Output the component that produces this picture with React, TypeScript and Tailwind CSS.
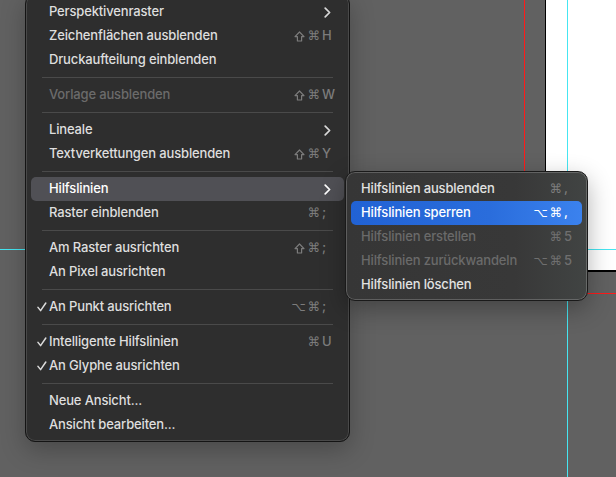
import React from "react";

type Item =
  | { sep: true }
  | {
      sep?: false;
      label: string;
      mods?: string;
      k?: string;
      sub?: boolean;
      check?: boolean;
      disabled?: boolean;
      hover?: boolean;
    };

const mainItems: Item[] = [
  { label: "Perspektivenraster", sub: true },
  { label: "Zeichenflächen ausblenden", mods: "⇧⌘", k: "H" },
  { label: "Druckaufteilung einblenden" },
  { sep: true },
  { label: "Vorlage ausblenden", mods: "⇧⌘", k: "W", disabled: true },
  { sep: true },
  { label: "Lineale", sub: true },
  { label: "Textverkettungen ausblenden", mods: "⇧⌘", k: "Y" },
  { sep: true },
  { label: "Hilfslinien", sub: true, hover: true },
  { label: "Raster einblenden", mods: "⌘", k: ";" },
  { sep: true },
  { label: "Am Raster ausrichten", mods: "⇧⌘", k: ";" },
  { label: "An Pixel ausrichten" },
  { sep: true },
  { label: "An Punkt ausrichten", mods: "⌥⌘", k: ";", check: true },
  { sep: true },
  { label: "Intelligente Hilfslinien", mods: "⌘", k: "U", check: true },
  { label: "An Glyphe ausrichten", check: true },
  { sep: true },
  { label: "Neue Ansicht..." },
  { label: "Ansicht bearbeiten..." },
];

const subItems = [
  { label: "Hilfslinien ausblenden", mods: "⌘", k: "," },
  { label: "Hilfslinien sperren", mods: "⌥⌘", k: ",", active: true },
  { label: "Hilfslinien erstellen", mods: "⌘", k: "5", disabled: true },
  { label: "Hilfslinien zurückwandeln", mods: "⌥⌘", k: "5", disabled: true },
  { label: "Hilfslinien löschen" },
];

const font = { fontFamily: "Inter, 'DejaVu Sans', sans-serif" };

function ShiftIcon() {
  return (
    <svg width="11" height="11" viewBox="0 0 11 11" className="mr-[1px]">
      <path
        d="M5.5 1 L10 5.6 L7.6 5.6 L7.6 10 L3.4 10 L3.4 5.6 L1 5.6 Z"
        fill="none"
        stroke="currentColor"
        strokeWidth="1.2"
        strokeLinejoin="round"
      />
    </svg>
  );
}

function Shortcut({ mods, k, className }: { mods: string; k: string; className: string }) {
  return (
    <span className={"flex items-center " + className}>
      <span className="flex items-center gap-[2px]" style={{ fontFamily: "'DejaVu Sans', sans-serif" }}>
        {mods.split("").map((m, i) =>
          m === "⇧" ? (
            <ShiftIcon key={i} />
          ) : (
            <span key={i} className="text-[12.5px]">
              {m}
            </span>
          )
        )}
      </span>
      <span className="ml-[2px] w-[12px] text-left">{k}</span>
    </span>
  );
}

function Chevron({ color }: { color: string }) {
  return (
    <svg width="7" height="11" viewBox="0 0 7 11" className="mr-[3px]">
      <path d="M1.2 1.2 L5.6 5.5 L1.2 9.8" fill="none" stroke={color} strokeWidth="1.7" strokeLinecap="round" strokeLinejoin="round" />
    </svg>
  );
}

function Check() {
  return (
    <svg width="10" height="10" viewBox="0 0 10 10">
      <path d="M1 5.4 L3.6 8.6 L8.8 1" fill="none" stroke="#dcdcdc" strokeWidth="1.5" strokeLinecap="round" strokeLinejoin="round" />
    </svg>
  );
}

export default function App() {
  return (
    <div className="relative h-[477px] w-[616px] overflow-hidden bg-[#616161]" style={font}>
      {/* canvas: artboard and guides */}
      <div className="absolute left-[545px] top-0 h-[272px] w-[71px] border-b-2 border-l border-black bg-white" />
      <div className="absolute left-[524px] top-0 h-[294px] w-px bg-[#ff1a1a]" />
      <div className="absolute left-[524px] top-[293px] h-px w-[92px] bg-[#ff1a1a]" />
      <div className="absolute left-0 top-[249px] h-px w-[616px] bg-[#45e6f2]" />
      <div className="absolute left-[567px] top-0 h-[477px] w-px bg-[#45e6f2]" />

      {/* main menu */}
      <div className="absolute left-[25px] top-[-6px] w-[325px] rounded-[10px] border border-[#141414] bg-[#2e2e2e] px-[5px] pb-[4px] pt-[5px] text-[13px] font-medium tracking-[-0.15px] text-[#dedede] shadow-[inset_0_0_0_1px_rgba(255,255,255,0.13),0_8px_24px_rgba(0,0,0,0.25)]">
        {mainItems.map((it, i) =>
          it.sep ? (
            <div key={i} className="flex h-[11px] items-center px-[11px]">
              <div className="h-px w-full bg-[#4a4a4a]" />
            </div>
          ) : (
            <div
              key={i}
              className={
                "flex h-[24px] items-center rounded-[5px] pl-[6px] pr-[10px] " +
                (it.hover ? "bg-[#505055] text-white" : "") +
                (it.disabled ? " text-[#6b6b6b]" : "")
              }
            >
              <span className="flex w-[12px] items-center">{it.check ? <Check /> : null}</span>
              <span className="flex-1">{it.label}</span>
              {it.sub ? <Chevron color={it.hover ? "#ffffff" : "#d8d8d8"} /> : null}
              {it.mods ? <Shortcut mods={it.mods} k={it.k!} className="text-[#7c7c7c]" /> : null}
            </div>
          )
        )}
      </div>

      {/* submenu */}
      <div className="absolute left-[345px] top-[171px] w-[243px] rounded-[10px] border border-[#1a1a1a] bg-[linear-gradient(90deg,#363636_0%,#383838_70%,#414443_100%)] px-[5px] pb-[3px] pt-[5px] text-[13px] font-medium tracking-[-0.15px] text-[#e2e2e2] shadow-[inset_0_0_0_1px_rgba(255,255,255,0.2),0_8px_24px_rgba(0,0,0,0.3)]">
        {subItems.map((it, i) => (
          <div
            key={i}
            className={
              "flex h-[24px] items-center rounded-[5px] pl-[10px] pr-[6px] " +
              (it.active ? "bg-[linear-gradient(90deg,#2162d4,#2a6ddc_60%,#3b82ee)] text-white" : "") +
              (it.disabled ? " text-[#6a6a6a]" : "")
            }
          >
            <span className="flex-1">{it.label}</span>
            {it.mods ? (
              <Shortcut
                mods={it.mods}
                k={it.k!}
                className={it.active ? "text-white" : it.disabled ? "text-[#6f6f6f]" : "text-[#7c7c7c]"}
              />
            ) : null}
          </div>
        ))}
      </div>
    </div>
  );
}
